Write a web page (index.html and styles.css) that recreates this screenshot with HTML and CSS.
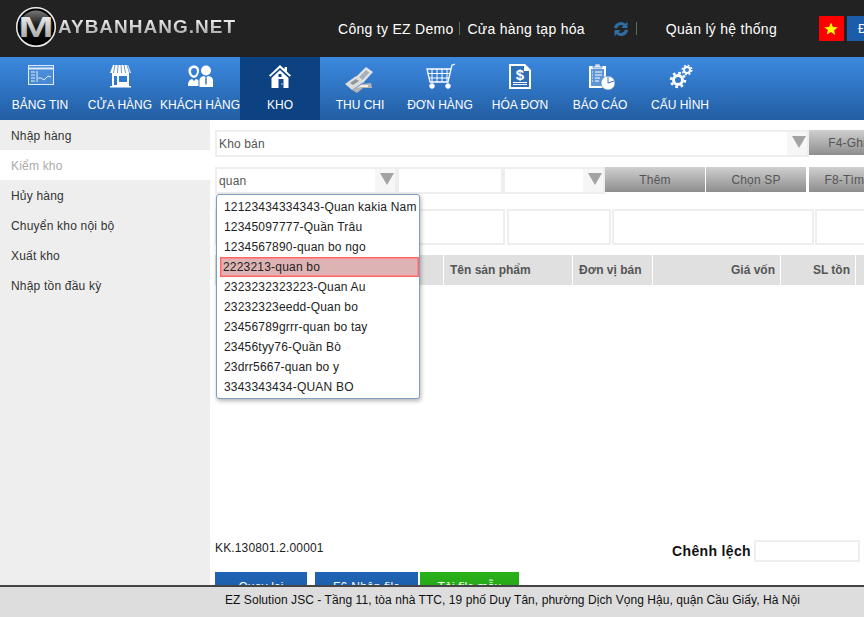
FILE: index.html
```html
<!DOCTYPE html>
<html lang="vi">
<head>
  <meta charset="UTF-8">
  <meta name="viewport" content="width=device-width, initial-scale=1.0">
  <title>Kiểm kho</title>
  <link rel="stylesheet" href="styles.css">
</head>
<body>
  <!-- Top bar -->
  <header class="topbar">
    <a class="logo" href="#">
      <svg class="logo-mark" width="42" height="42" viewBox="0 0 42 42">
        <defs>
          <linearGradient id="logoBg" x1="0" y1="0" x2="0" y2="1">
            <stop offset="0" stop-color="#777"/>
            <stop offset="0.45" stop-color="#1a1a1a"/>
            <stop offset="1" stop-color="#000"/>
          </linearGradient>
          <linearGradient id="logoM" x1="0" y1="0" x2="0" y2="1">
            <stop offset="0" stop-color="#fff"/>
            <stop offset="1" stop-color="#999"/>
          </linearGradient>
        </defs>
        <circle cx="21" cy="21" r="19.3" fill="#000" stroke="#eee" stroke-width="1.5"/>
        <circle cx="21" cy="21" r="16.500" fill="url(#logoBg)"/>
        <text x="3.5" y="31" class="logo-m" fill="url(#logoM)" textLength="35" lengthAdjust="spacingAndGlyphs">M</text>
      </svg>
      <span class="logo-text">AYBANHANG.NET</span>
    </a>
    <span class="top-link company">Công ty EZ Demo</span>
    <span class="top-sep"></span>
    <span class="top-link">Cửa hàng tạp hóa</span>
    <svg class="refresh" width="18" height="20" viewBox="0 0 18 20">
      <path d="M2 9a7 7 0 0 1 11.500-4.300L15.500 2.500V9h-6.300l2.200-2.200A4.200 4.200 0 0 0 5 9.500z" fill="#2f6c9f"/>
      <path d="M16 11a7 7 0 0 1-11.500 4.300L2.500 17.500V11h6.300l-2.200 2.200A4.200 4.200 0 0 0 13 10.500z" fill="#2f6c9f"/>
    </svg>
    <span class="top-sep sep-refresh"></span>
    <span class="top-link system">Quản lý hệ thống</span>
    <span class="flag">
      <svg width="16" height="16" viewBox="0 0 16 16"><path d="M8 1.500l1.900 4.400 4.800.4-3.600 3.100 1.100 4.700L8 11.100l-4.200 2.500 1.100-4.700L1.300 6.300l4.800-.4z" fill="#ff0"/></svg>
    </span>
    <span class="lang">Đ</span>
  </header>

  <!-- Main menu -->
  <nav class="mainnav">
    <a class="nav-item" href="#">
      <svg class="nav-icon" viewBox="0 0 32 32" fill="none" stroke="#dfeaf7">
        <rect x="4.500" y="3.500" width="25" height="19" fill="#5f9be0" fill-opacity=".5"/>
        <path d="M4.500 6.500h25" stroke-width="2"/>
        <path d="M7 10h4M7 13h4M7 16h4M7 19h4M13 9v11M14 16h3l3 2 4-4 3 1"/>
      </svg>
      <span>BẢNG TIN</span>
    </a>
    <a class="nav-item" href="#">
      <svg class="nav-icon" viewBox="0 0 32 32" fill="#fff">
        <path d="M9 3h15l3 8H6z"/>
        <path d="M11 3l-1.500 8M14 3l-.5 8M17 3l.5 8M20 3l1.500 8M23 3l2.500 8" stroke="#4a7fbe" stroke-width=".8"/>
        <path d="M8 11h17v14H8zM10 14v9h3v-9zM15 14v6h8v-6z" fill-rule="evenodd"/>
        <path d="M6 24h21v1.500H6z"/>
      </svg>
      <span>CỬA HÀNG</span>
    </a>
    <a class="nav-item" href="#">
      <svg class="nav-icon" viewBox="0 0 32 32" fill="#fff">
        <path d="M10 3.500c3.500 0 5.500 2.500 5 6-.4 2.500-1.500 4.500-2.500 5.500l-2.500 1-2.500-1c-1.500-1-2.700-3-3-5.500-.4-3.500 2-6 5.500-6zm0 2.500c-2 0-3 1.500-3 3.500s1.500 4 3 4 3-2 3-4-1-3.500-3-3.500z" fill-rule="evenodd"/>
        <path d="M4 24c0-4 1-6 4-7l2 2 2-2c1 .3 2 .8 2.500 1.500V24z"/>
        <circle cx="22" cy="8.500" r="5"/>
        <path d="M15.500 25v-7c0-2.500 2-3.500 4.500-4l2 1.500 2-1.500c3 .5 5 1.500 5 4v7z"/>
        <path d="M22 15.500v7" stroke="#3a76bf" stroke-width="1.500"/>
      </svg>
      <span>KHÁCH HÀNG</span>
    </a>
    <a class="nav-item active" href="#">
      <svg class="nav-icon" viewBox="0 0 32 32" fill="#fff">
        <path d="M16 3L5 13.500l1.300 1.300L16 6l9.700 8.800 1.300-1.300-4-3.800V5h-2.500v2.300z"/>
        <path d="M16 8l-8.500 8v10h17V16zM14.500 12h3v3h-3z" fill-rule="evenodd"/>
        <path d="M14.500 17h5v9h-5z" fill="#0f4a90"/>
        <circle cx="18" cy="22" r=".7"/>
      </svg>
      <span>KHO</span>
    </a>
    <a class="nav-item" href="#">
      <svg class="nav-icon" viewBox="0 0 32 32">
        <path d="M12 15L22 5l7 5-10 11z" fill="#e4e4e4"/>
        <path d="M15 15l7-7 3.500 2.500-7 7.500z" fill="#a9b1b8"/>
        <path d="M1 22l11-8 8 6-12 8z" fill="#dcdcdc"/>
        <path d="M6 21l6-4 3 2-6 4z" fill="#8e979f"/>
        <path d="M8 28l5 3 6-5h9l-1-5-9 1z" fill="#b5b5b5"/>
        <path d="M13 26l4-3h7v2h-7z" fill="#eee"/>
      </svg>
      <span>THU CHI</span>
    </a>
    <a class="nav-item" href="#">
      <svg class="nav-icon" viewBox="0 0 32 32" fill="none" stroke="#fff">
        <path d="M31 2l-3 1.200-1 3.800-3 13H6L3 7h24" stroke-width="1.300"/>
        <path d="M8 7v13M13 7v13M18 7v13M23 7v13M3.500 11.500h22.500M5 16h20"/>
        <circle cx="8" cy="24" r="2.300" fill="#fff"/>
        <circle cx="24" cy="24" r="2.300" fill="#fff"/>
      </svg>
      <span>ĐƠN HÀNG</span>
    </a>
    <a class="nav-item" href="#">
      <svg class="nav-icon" viewBox="0 0 32 32">
        <path d="M5 2h16l6 6v19H5z" fill="#fff"/>
        <path d="M7 4h13v5h5v16H7z" fill="#2f6fb8"/>
        <text x="16" y="18" class="invoice-sign">$</text>
        <path d="M9 20.500h14M9 22.500h14" stroke="#fff"/>
      </svg>
      <span>HÓA ĐƠN</span>
    </a>
    <a class="nav-item" href="#">
      <svg class="nav-icon" viewBox="0 0 32 32">
        <path d="M5 4h17v22H5z" fill="#fff"/>
        <path d="M11 2h5v2h2v2H9V4h2z" fill="#d8e6f5" stroke="#3a76bf" stroke-width=".6"/>
        <path d="M7 7h13v17H7z" fill="#5e97d8"/>
        <path d="M8 10h1M8 13h1M8 16h1M8 19h1M11 10h7M11 13h7M11 16h5M11 19h4" stroke="#fff"/>
        <circle cx="24" cy="21" r="7" fill="#fff" stroke="#3a76bf" stroke-width=".6"/>
        <path d="M24 21V14.500M24 21l6-2" stroke="#3a76bf"/>
      </svg>
      <span>BÁO CÁO</span>
    </a>
    <a class="nav-item" href="#">
      <svg class="nav-icon" viewBox="0 0 32 32" fill="none" stroke="#fff">
        <circle cx="14" cy="18" r="4.500" stroke-width="3"/>
        <circle cx="14" cy="18" r="7" stroke-width="2.500" stroke-dasharray="2.700 2.800"/>
        <circle cx="23" cy="8" r="3" stroke-width="2"/>
        <circle cx="23" cy="8" r="4.700" stroke-width="1.700" stroke-dasharray="1.800 1.900"/>
      </svg>
      <span>CẤU HÌNH</span>
    </a>
  </nav>

  <div class="page">
    <!-- Sidebar -->
    <aside class="sidebar">
      <a href="#">Nhập hàng</a>
      <a href="#" class="current">Kiểm kho</a>
      <a href="#">Hủy hàng</a>
      <a href="#">Chuyển kho nội bộ</a>
      <a href="#">Xuất kho</a>
      <a href="#">Nhập tồn đầu kỳ</a>
    </aside>

    <!-- Stock check form -->
    <main class="content">
      <div class="row row-store">
        <div class="combo w-594"><span>Kho bán</span><i class="arrow"></i></div>
        <button class="btn-gray w-100">F4-Ghi tạm</button>
      </div>

      <div class="row row-search">
        <div class="search-wrap">
          <div class="combo w-182"><span>quan</span><i class="arrow"></i></div>
          <ul class="suggest">
            <li>12123434334343-Quan kakia Nam</li>
            <li>12345097777-Quần Trâu</li>
            <li>1234567890-quan bo ngo</li>
            <li class="selected">2223213-quan bo</li>
            <li>2323232323223-Quan Au</li>
            <li>23232323eedd-Quan bo</li>
            <li>23456789grrr-quan bo tay</li>
            <li>23456tyy76-Quần Bò</li>
            <li>23drr5667-quan bo y</li>
            <li>3343343434-QUAN BO</li>
          </ul>
        </div>
        <input class="field w-106" type="text">
        <div class="combo w-102"><span></span><i class="arrow"></i></div>
        <button class="btn-gray w-100">Thêm</button>
        <button class="btn-gray w-100 gap-1">Chọn SP</button>
        <button class="btn-gray w-100 gap-3">F8-Tìm kiếm</button>
      </div>

      <div class="row row-detail">
        <input class="field w-290" type="text">
        <input class="field w-104" type="text">
        <input class="field w-202" type="text">
        <input class="field w-100" type="text">
      </div>

      <div class="grid-head">
        <div class="cell c-code"></div>
        <div class="cell c-name">Tên sản phẩm</div>
        <div class="cell c-unit">Đơn vị bán</div>
        <div class="cell c-cost num">Giá vốn</div>
        <div class="cell c-qty num">SL tồn</div>
        <div class="cell c-more"></div>
      </div>

      <div class="summary">
        <span class="doc-no">KK.130801.2.00001</span>
        <label class="diff">Chênh lệch <input class="field diff-input" type="text"></label>
      </div>

      <div class="actions">
        <button class="btn-blue w-92">Quay lại</button>
        <button class="btn-blue w-103">F6-Nhận file</button>
        <button class="btn-green">Tải file mẫu</button>
      </div>
    </main>
  </div>

  <footer class="footer">EZ Solution JSC - Tầng 11, tòa nhà TTC, 19 phố Duy Tân, phường Dịch Vọng Hậu, quận Cầu Giấy, Hà Nội</footer>
</body>
</html>
```

FILE: styles.css
```css
* {
  box-sizing: border-box;
}
html, body {
  height: 100%;
}
body {
  margin: 0;
  font-family: "Liberation Sans", Arial, sans-serif;
  font-size: 12px;
  color: #333;
  overflow: hidden;
  display: flex;
  flex-direction: column;
}
a {
  text-decoration: none;
  color: inherit;
}

/* top bar */
.topbar {
  height: 57px;
  flex: none;
  background: #222;
  display: flex;
  align-items: center;
  color: #fff;
  white-space: nowrap;
  overflow: hidden;
}
.logo {
  display: flex;
  align-items: center;
  margin: -3px 0 0 15px;
  width: 220px;
  flex: none;
}
.logo-mark {
  flex: none;
}
.logo-m {
  font-size: 30px;
  font-weight: bold;
}
.logo-text {
  font-size: 19px;
  font-weight: bold;
  letter-spacing: 1px;
  margin-left: 1px;
  background: linear-gradient(#fff, #999);
  -webkit-background-clip: text;
  background-clip: text;
  color: transparent;
}
.top-link {
  font-size: 14px;
  letter-spacing: 0.28px;
  flex: none;
}
.company {
  margin-left: 103px;
}
.top-sep {
  width: 1px;
  height: 13px;
  flex: none;
  background: #5a6e5a;
  margin: 0 7px 0 6px;
}
.refresh {
  flex: none;
  margin-left: 27px;
}
.sep-refresh {
  margin-right: 29px;
}
.flag {
  width: 25px;
  height: 25px;
  background: #f00;
  display: flex;
  align-items: center;
  justify-content: center;
  margin-left: 42px;
  flex: none;
}
.lang {
  width: 40px;
  height: 25px;
  flex: none;
  margin-left: 3px;
  padding: 5px 0 0 11px;
  background: #1d5ca8;
  font-size: 13px;
}

/* main menu */
.mainnav {
  height: 63px;
  flex: none;
  display: flex;
  background: linear-gradient(#3c89e0, #225ea3);
}
.nav-item {
  width: 80px;
  display: flex;
  flex-direction: column;
  align-items: center;
  padding-top: 5px;
  color: #fff;
  font-size: 12px;
  white-space: nowrap;
}
.nav-item.active {
  background: #0c4182;
}
.nav-icon {
  width: 32px;
  height: 32px;
  flex: none;
  margin-bottom: 4px;
}
.invoice-sign {
  font-size: 15px;
  font-weight: bold;
  fill: #fff;
  text-anchor: middle;
}

/* page */
.page {
  flex: 1;
  display: flex;
  min-height: 0;
}
.sidebar {
  width: 210px;
  flex: none;
  background: #eee;
  letter-spacing: 0.2px;
}
.sidebar a {
  display: block;
  height: 30px;
  line-height: 32px;
  padding-left: 11px;
}
.sidebar a.current {
  background: #fff;
  color: #aaa;
}

/* form */
.content {
  flex: 1;
  min-width: 0;
  padding: 10px 0 0 5px;
  overflow: hidden;
  position: relative;
  letter-spacing: 0.15px;
}
.row {
  display: flex;
  width: 800px;
}
.row-search {
  margin-top: 10px;
}
.row-detail {
  margin-top: 15px;
  height: 36px;
}
.combo {
  height: 27px;
  flex: none;
  display: flex;
  align-items: stretch;
  border: 2px solid #eee;
  background: #fff;
  color: #555;
}
.combo span {
  flex: 1;
  line-height: 24px;
  padding-left: 2px;
}
.arrow {
  width: 20px;
  position: relative;
  background: #f6f6f6;
}
.arrow::after {
  content: "";
  position: absolute;
  left: 5px;
  top: 4px;
  border-style: solid;
  border-width: 12px 7.500px 0;
  border-color: #a3a3a3 transparent transparent;
}
.field {
  flex: none;
  height: 100%;
  border: 2px solid #eee;
  background: #fff;
  padding: 0 2px;
  outline: 0;
}
.row-search .field {
  height: 27px;
}
.btn-gray {
  flex: none;
  height: 25px;
  border: 0;
  padding: 0;
  background: linear-gradient(#cfcfcf, #8e8e8e);
  color: #555;
  font: inherit;
  letter-spacing: inherit;
  white-space: nowrap;
}
.gap-1 {
  margin-left: 1px;
}
.gap-3 {
  margin-left: 3px;
}
.w-594 { width: 594px; }
.w-182 { width: 182px; }
.w-106 { width: 106px; }
.w-102 { width: 102px; }
.w-100 { width: 100px; }
.w-104 { width: 104px; margin-left: 2px; }
.w-290 { width: 290px; }
.w-202 { width: 202px; margin-left: 1px; }
.row-detail .w-100 { margin-left: 1px; }

.search-wrap {
  position: relative;
  flex: none;
}
.suggest {
  position: absolute;
  left: 1px;
  top: 27px;
  z-index: 5;
  width: 204px;
  height: 205px;
  margin: 0;
  padding: 2px 0 0 3px;
  list-style: none;
  background: #fff;
  border: 1px solid #7f9fc0;
  border-radius: 3px;
  box-shadow: 1px 2px 4px rgba(0, 0, 0, 0.3);
  color: #222;
  letter-spacing: 0.2px;
}
.suggest li {
  height: 20px;
  line-height: 20px;
  padding-left: 4px;
  white-space: nowrap;
}
.suggest li.selected {
  width: 199px;
  line-height: 18px;
  padding-left: 2px;
  background: #deb3b3;
  border: 1px solid #f66;
  box-shadow: 0 0 0 1px #f88 inset;
}

/* grid */
.grid-head {
  display: flex;
  width: 800px;
  height: 30px;
  margin-top: 10px;
  gap: 1px;
  letter-spacing: 0;
}
.cell {
  background: #e0e0e0;
  font-weight: bold;
  color: #555;
  line-height: 30px;
  padding: 0 6px;
  flex: none;
  white-space: nowrap;
}
.cell.num {
  text-align: right;
  padding-right: 5px;
}
.c-code { width: 228px; }
.c-name { width: 128px; }
.c-unit { width: 79px; }
.c-cost { width: 127px; }
.c-qty { width: 74px; }
.c-more { width: 60px; }

.summary {
  display: flex;
  justify-content: space-between;
  align-items: center;
  width: 645px;
  height: 22px;
  margin-top: 255px;
  color: #222;
}
.doc-no {
  margin-top: -7px;
}
.diff {
  display: flex;
  align-items: center;
  gap: 3px;
  font-size: 14px;
  font-weight: bold;
  color: #111;
  letter-spacing: 0.35px;
}
.diff-input {
  width: 106px;
  height: 22px;
}
.actions {
  display: flex;
  margin-top: 10px;
}
.actions button {
  height: 30px;
  border: 0;
  color: #fff;
  font: inherit;
  letter-spacing: inherit;
  padding: 0;
}
.btn-blue {
  background: linear-gradient(#1f64b4, #1a5aa5);
}
.w-92 { width: 92px; margin-right: 8px; }
.w-103 { width: 103px; margin-right: 2px; }
.btn-green {
  width: 99px;
  background: linear-gradient(#2ab21a, #1f9d12);
}

/* footer */
.footer {
  position: fixed;
  left: 0;
  right: 0;
  bottom: 0;
  height: 32px;
  border-top: 2px solid #444;
  background: #ddd;
  color: #111;
  padding-left: 225px;
  line-height: 26px;
  letter-spacing: 0.06px;
  white-space: nowrap;
}
```
